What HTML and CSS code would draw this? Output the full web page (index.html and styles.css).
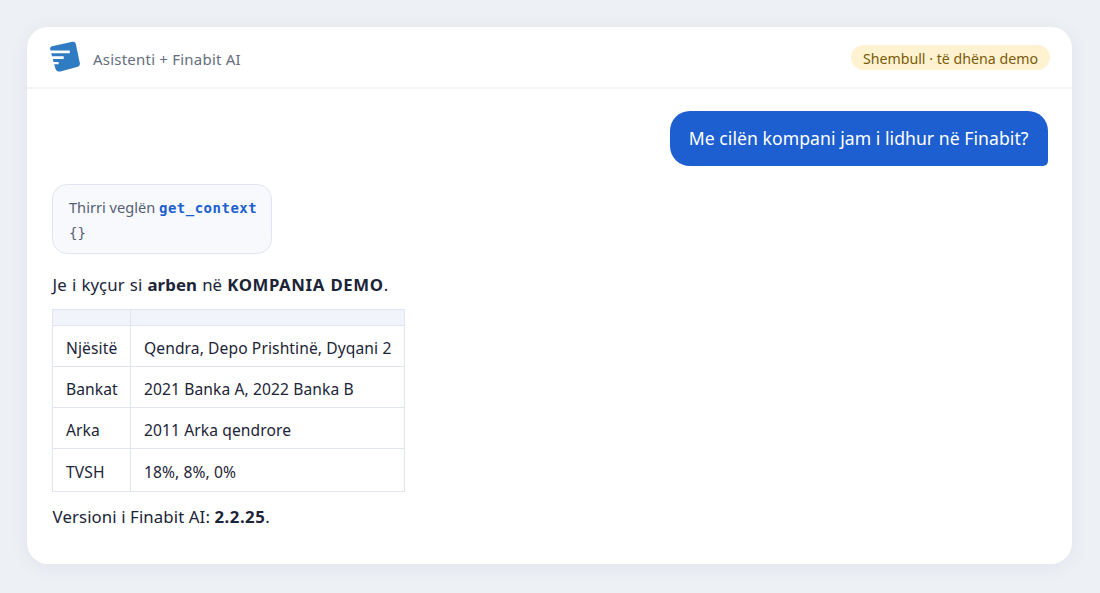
FILE: index.html
```html
<!DOCTYPE html>
<html lang="sq">
<head>
  <meta charset="utf-8">
  <title>Asistenti + Finabit AI</title>
  <link rel="stylesheet" href="styles.css">
</head>
<body>

<div class="card">
  <div class="header">
    <svg class="logo" width="32" height="32" viewBox="0 0 32 32">
      <path d="M3 5.2 L23.4 .8 Q26 .3 26.8 3 L30.9 22.6 Q31.3 25 28.8 25.7 L11.4 30.4 Q8.2 31.2 6.8 28.4 L5.4 24 L1.3 9 Q.6 5.9 3 5.2 Z" fill="#2f7cc3"/>
      <path d="M0 9.5 H20.8 V12.3 H0 Z M0 15.3 H14.7 V17.9 H0 Z M0 20.9 H9.6 V23.3 H0 Z" fill="#fff"/>
    </svg>
    <span class="title">Asistenti + Finabit AI</span>
    <span class="pill">Shembull · të dhëna demo</span>
  </div>

  <div class="chat">
    <div class="question">Me cilën kompani jam i lidhur në Finabit?</div>

    <div class="tool">
      <div>Thirri veglën <code class="name">get_context</code></div>
      <code class="args">{}</code>
    </div>

    <p class="intro">Je i kyçur si <b>arben</b> në <b class="company">KOMPANIA DEMO</b>.</p>

    <table>
      <thead>
        <tr><th></th><th></th></tr>
      </thead>
      <tbody>
        <tr><td>Njësitë</td><td>Qendra, Depo Prishtinë, Dyqani 2</td></tr>
        <tr><td>Bankat</td><td>2021 Banka A, 2022 Banka B</td></tr>
        <tr><td>Arka</td><td>2011 Arka qendrore</td></tr>
        <tr><td>TVSH</td><td>18%, 8%, 0%</td></tr>
      </tbody>
    </table>

    <p class="version">Versioni i Finabit AI: <b>2.2.25</b>.</p>
  </div>
</div>

</body>
</html>
```
FILE: styles.css
```css
* {
  box-sizing: border-box;
}

body {
  margin: 0;
  padding: 27px 28px 30px 27px;
  height: 593px;
  background: #edf1f6;
  color: #1c2438;
  font-family: "Noto Sans", "Open Sans", sans-serif;
  font-size: 16px;
}

.card {
  height: 537px;
  background: #fff;
  border-radius: 21px;
  box-shadow: 0 3px 20px rgba(28, 36, 56, .06);
}

.header {
  display: flex;
  align-items: center;
  height: 62px;
  padding: 0 22px;
  border-bottom: 2px solid #f3f4f7;
}

.logo {
  flex: none;
}

.title {
  margin-left: 12px;
  padding-top: 4px;
  color: #656d80;
  font-size: 15px;
  letter-spacing: .22px;
}

.pill {
  margin-left: auto;
  height: 25px;
  padding: 0 12px;
  border-radius: 13px;
  background: #fff2d0;
  color: #7a5a0a;
  font-size: 14.2px;
  line-height: 27px;
}

.chat {
  display: flex;
  flex-direction: column;
  align-items: flex-start;
  padding: 22px 24.5px 0 25px;
}

.question {
  align-self: flex-end;
  height: 55px;
  padding: 0 19px;
  border-radius: 20px 20px 5px 20px;
  background: #1d5fd1;
  color: #fff;
  font-size: 17.6px;
  letter-spacing: .05px;
  line-height: 54px;
}

.tool {
  width: 220px;
  height: 70px;
  margin-top: 18px;
  padding: 9px 15px 9px 16px;
  border: 1px solid #e1e5ef;
  border-radius: 15px;
  background: #f8f9fd;
  color: #555e73;
  font-size: 14.6px;
  line-height: 26px;
  white-space: nowrap;
}

code {
  font-family: "DejaVu Sans Mono", monospace;
  font-size: 14px;
}

.name {
  color: #1d5fd1;
  font-weight: bold;
  letter-spacing: .5px;
}

.args {
  display: block;
  line-height: 24px;
}

p {
  margin: 0 0 0 .6px;
  font-size: 16.8px;
  letter-spacing: .1px;
  line-height: 26px;
  white-space: nowrap;
}

.intro {
  margin-top: 18px;
  word-spacing: .6px;
}

.company {
  letter-spacing: .6px;
}

table {
  width: 353px;
  margin-top: 11px;
  border-collapse: collapse;
  table-layout: fixed;
  white-space: nowrap;
  font-size: 15.6px;
  letter-spacing: .1px;
}

th, td {
  padding: 3px 13px 0;
  border: 1px solid #e1e5ed;
  text-align: left;
}

th {
  height: 16px;
  background: #f1f4fb;
}

th:first-child {
  width: 78px;
}

td {
  height: 41px;
}

tr:last-child td {
  height: 43px;
}

.version {
  margin-top: 12px;
}

.version b {
  letter-spacing: .5px;
}
```
